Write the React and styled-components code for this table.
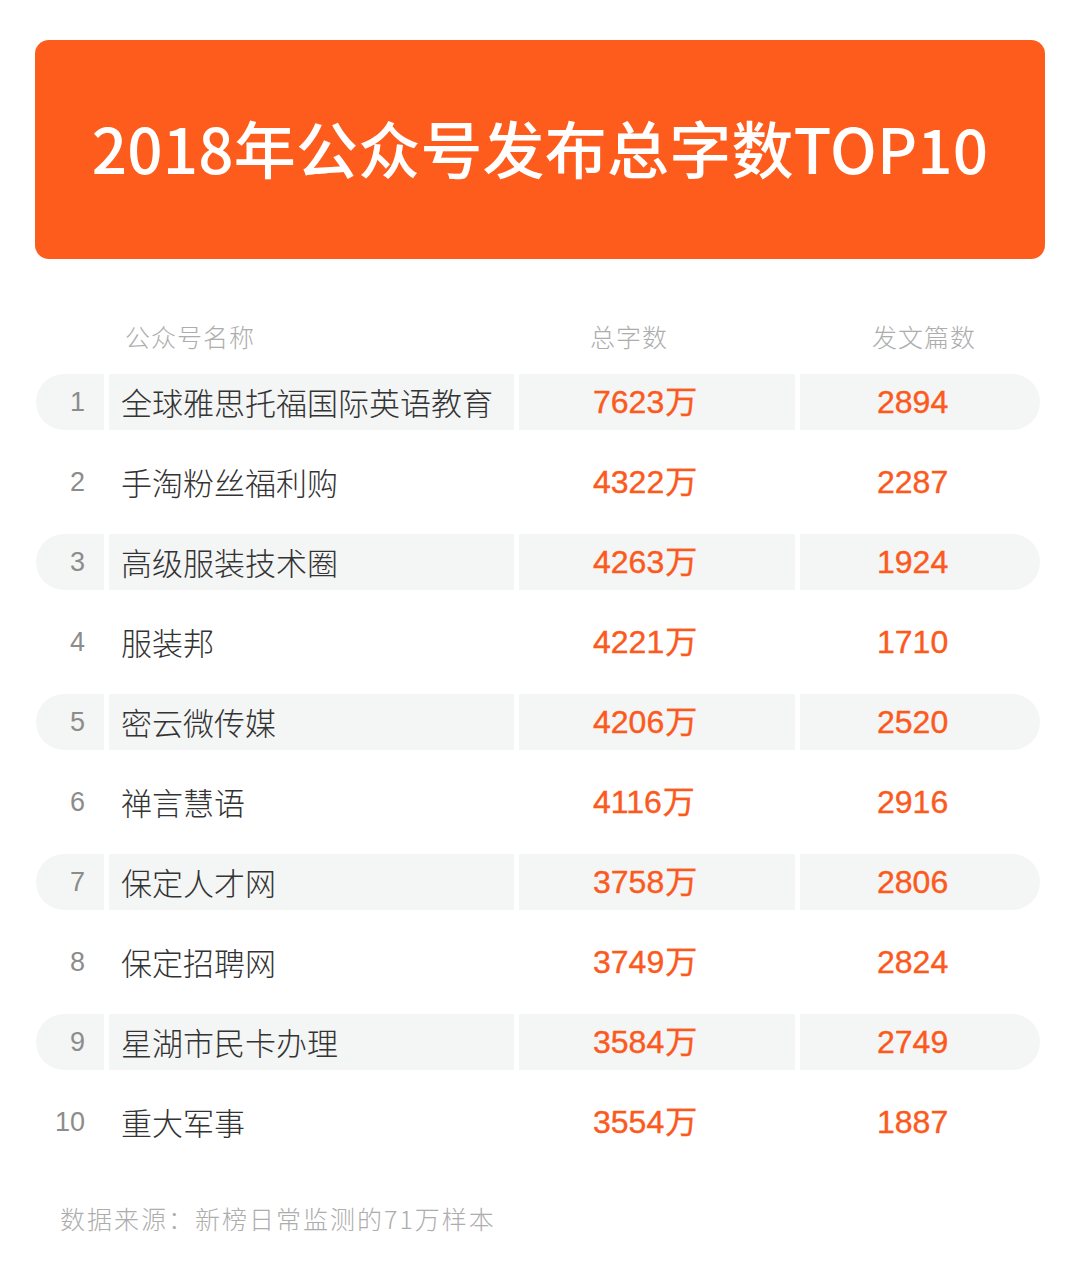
import React from "react";
import styled, { createGlobalStyle } from "styled-components";

const GlobalStyle = createGlobalStyle`
  body {
    margin: 0;
    background: #fff;
    font-family: "Liberation Sans", "Noto Sans CJK SC", sans-serif;
  }
`;

const rows = [
  { name: "全球雅思托福国际英语教育", words: "7623", posts: "2894" },
  { name: "手淘粉丝福利购", words: "4322", posts: "2287" },
  { name: "高级服装技术圈", words: "4263", posts: "1924" },
  { name: "服装邦", words: "4221", posts: "1710" },
  { name: "密云微传媒", words: "4206", posts: "2520" },
  { name: "禅言慧语", words: "4116", posts: "2916" },
  { name: "保定人才网", words: "3758", posts: "2806" },
  { name: "保定招聘网", words: "3749", posts: "2824" },
  { name: "星湖市民卡办理", words: "3584", posts: "2749" },
  { name: "重大军事", words: "3554", posts: "1887" },
];

const Page = styled.div`
  width: 1080px;
  height: 1280px;
  padding-top: 40px;
  box-sizing: border-box;
`;

const Banner = styled.div`
  margin-left: 35px;
  width: 1010px;
  height: 219px;
  border-radius: 14px;
  background: #fd5c1c;
  display: flex;
  align-items: center;
  justify-content: center;
`;

const Title = styled.h1`
  margin: 0;
  color: #fff;
  font-family: "Noto Sans CJK SC", sans-serif;
  font-weight: 500;
  font-size: 62px;
  letter-spacing: 0.2px;
  padding-bottom: 6px;
`;

const Table = styled.div`
  margin: 49px 0 0 36px;
  display: flex;
  flex-direction: column;
  gap: 24px;
`;

const grid = `
  display: grid;
  grid-template-columns: 68px 405px 276px 240px;
  column-gap: 5px;
`;

const HeadRow = styled.div`
  ${grid}
  height: 56px;
  margin-bottom: -14px;
  align-items: center;
  color: #adadad;
  font-family: "Noto Sans CJK SC", sans-serif;
  font-weight: 300;
  font-size: 25px;
  letter-spacing: 1px;
`;

const HeadCell = styled.div`
  padding-left: ${(p) => p.$pad}px;
`;

const Row = styled.div`
  ${grid}
  height: 56px;
`;

const Cell = styled.div`
  display: flex;
  align-items: center;
  background: ${(p) => (p.$shade ? "#f4f5f5" : "transparent")};
  padding-left: ${(p) => p.$pad || 0}px;
  border-radius: ${(p) => p.$radius || "0"};
`;

const RankCell = styled(Cell)`
  justify-content: flex-end;
  padding-right: 19px;
`;

const Rank = styled.span`
  color: #8c8c8c;
  font-size: 27px;
`;

const Name = styled.span`
  color: #333;
  font-family: "Noto Sans CJK SC", sans-serif;
  font-weight: 300;
  font-size: 31px;
  padding-bottom: 2px;
`;

const Num = styled.span`
  color: #fb5a1e;
  font-size: 32px;
  display: flex;
  align-items: center;
  -webkit-text-stroke: 0.4px #fb5a1e;
`;

const Wan = styled.span`
  font-family: "Noto Sans CJK SC", sans-serif;
  font-size: 32px;
  font-weight: 400;
  margin-left: 1px;
  padding-bottom: 6px;
`;

const Footer = styled.div`
  margin: 50px 0 0 60px;
  color: #adadad;
  font-family: "Noto Sans CJK SC", sans-serif;
  font-weight: 300;
  font-size: 25px;
  letter-spacing: 2px;
`;

export default function App() {
  return (
    <Page>
      <GlobalStyle />
      <Banner>
        <Title>2018年公众号发布总字数TOP10</Title>
      </Banner>
      <Table>
        <HeadRow>
          <HeadCell />
          <HeadCell $pad={16}>公众号名称</HeadCell>
          <HeadCell $pad={71}>总字数</HeadCell>
          <HeadCell $pad={72}>发文篇数</HeadCell>
        </HeadRow>
        {rows.map((r, i) => {
          const shade = i % 2 === 0;
          return (
            <Row key={r.name}>
              <RankCell $shade={shade} $radius="28px 0 0 28px">
                <Rank>{i + 1}</Rank>
              </RankCell>
              <Cell $shade={shade} $pad={12}>
                <Name>{r.name}</Name>
              </Cell>
              <Cell $shade={shade} $pad={74}>
                <Num>
                  {r.words}
                  <Wan>万</Wan>
                </Num>
              </Cell>
              <Cell $shade={shade} $pad={77} $radius="0 28px 28px 0">
                <Num>{r.posts}</Num>
              </Cell>
            </Row>
          );
        })}
      </Table>
      <Footer>数据来源：新榜日常监测的71万样本</Footer>
    </Page>
  );
}
